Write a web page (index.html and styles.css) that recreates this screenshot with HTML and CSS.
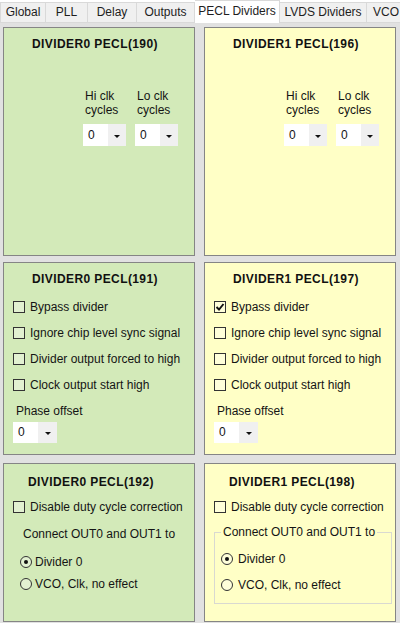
FILE: index.html
```html
<!DOCTYPE html>
<html lang="en">
<head>
    <meta charset="UTF-8">
    <meta name="viewport" content="width=device-width, initial-scale=1.0">
    <title>PECL Dividers</title>
    <link rel="stylesheet" href="styles.css">
</head>
<body>
    <div class="tabs">
        <div class="tab tab-global">Global</div>
        <div class="tab tab-pll">PLL</div>
        <div class="tab tab-delay">Delay</div>
        <div class="tab tab-outputs">Outputs</div>
        <div class="tab tab-pecl selected">PECL Dividers</div>
        <div class="tab tab-lvds">LVDS Dividers</div>
        <div class="tab tab-vco">VCO</div>
    </div>

    <div class="page">
        <div class="row row-1">
            <div class="panel green">
                <div class="title">DIVIDER0 PECL(190)</div>
                <div class="cycles">
                    <div class="cycle-col">
                        <div class="cycle-label">Hi clk<br>cycles</div>
                        <div class="combo"><span class="combo-val">0</span><span class="combo-btn"><span class="arrow"></span></span></div>
                    </div>
                    <div class="cycle-col">
                        <div class="cycle-label">Lo clk<br>cycles</div>
                        <div class="combo"><span class="combo-val">0</span><span class="combo-btn"><span class="arrow"></span></span></div>
                    </div>
                </div>
            </div>
            <div class="panel yellow">
                <div class="title">DIVIDER1 PECL(196)</div>
                <div class="cycles">
                    <div class="cycle-col">
                        <div class="cycle-label">Hi clk<br>cycles</div>
                        <div class="combo"><span class="combo-val">0</span><span class="combo-btn"><span class="arrow"></span></span></div>
                    </div>
                    <div class="cycle-col">
                        <div class="cycle-label">Lo clk<br>cycles</div>
                        <div class="combo"><span class="combo-val">0</span><span class="combo-btn"><span class="arrow"></span></span></div>
                    </div>
                </div>
            </div>
        </div>

        <div class="row row-2">
            <div class="panel green">
                <div class="title">DIVIDER0 PECL(191)</div>
                <div class="checks">
                    <div class="check"><span class="box"></span>Bypass divider</div>
                    <div class="check"><span class="box"></span>Ignore chip level sync signal</div>
                    <div class="check"><span class="box"></span>Divider output forced to high</div>
                    <div class="check"><span class="box"></span>Clock output start high</div>
                </div>
                <div class="phase-label">Phase offset</div>
                <div class="combo phase-combo"><span class="combo-val">0</span><span class="combo-btn"><span class="arrow"></span></span></div>
            </div>
            <div class="panel yellow">
                <div class="title">DIVIDER1 PECL(197)</div>
                <div class="checks">
                    <div class="check"><span class="box"><svg width="10" height="10" viewBox="0 0 10 10"><polyline points="1.5,5 4,7.5 8.5,2" fill="none" stroke="#111" stroke-width="1.9"/></svg></span>Bypass divider</div>
                    <div class="check"><span class="box"></span>Ignore chip level sync signal</div>
                    <div class="check"><span class="box"></span>Divider output forced to high</div>
                    <div class="check"><span class="box"></span>Clock output start high</div>
                </div>
                <div class="phase-label">Phase offset</div>
                <div class="combo phase-combo"><span class="combo-val">0</span><span class="combo-btn"><span class="arrow"></span></span></div>
            </div>
        </div>

        <div class="row row-3">
            <div class="panel green">
                <div class="title">DIVIDER0 PECL(192)</div>
                <div class="check duty"><span class="box"></span>Disable duty cycle correction</div>
                <div class="connect-label">Connect OUT0 and OUT1 to</div>
                <div class="radios">
                    <div class="radio"><span class="circle on"></span>Divider 0</div>
                    <div class="radio"><span class="circle"></span>VCO, Clk, no effect</div>
                </div>
            </div>
            <div class="panel yellow">
                <div class="title">DIVIDER1 PECL(198)</div>
                <div class="check duty"><span class="box"></span>Disable duty cycle correction</div>
                <fieldset class="group">
                    <legend>Connect OUT0 and OUT1 to</legend>
                    <div class="radio"><span class="circle on"></span>Divider 0</div>
                    <div class="radio"><span class="circle"></span>VCO, Clk, no effect</div>
                </fieldset>
            </div>
        </div>
    </div>
</body>
</html>
```

FILE: styles.css
```css
body {
    margin: 0;
    width: 400px;
    height: 623px;
    overflow: hidden;
    font-family: "Liberation Sans", Arial, sans-serif;
    font-size: 12px;
    color: #141414;
    background: #fff;
}

/* tab strip */
.tabs {
    display: flex;
    height: 22px;
    border-bottom: 1px solid #d9d9d9;
    white-space: nowrap;
}
.tab {
    box-sizing: border-box;
    flex: none;
    margin-top: 2px;
    height: 20px;
    line-height: 19px;
    text-align: center;
    background: #f0f0f0;
    border: 1px solid #d9d9d9;
    border-left: none;
    border-bottom: none;
    color: #1e1e1e;
}
.tab-global { width: 46px; border-left: 1px solid #d9d9d9; }
.tab-pll { width: 42px; }
.tab-delay { width: 49px; }
.tab-outputs { width: 58px; }
.tab-pecl { width: 85px; }
.tab-lvds { width: 87px; }
.tab-vco { width: 40px; text-align: left; padding-left: 6px; }
.tab.selected {
    margin-top: 0;
    height: 23px;
    line-height: 21px;
    background: #fff;
    position: relative;
    z-index: 1;
}

/* tab page */
.page {
    height: 600px;
    box-sizing: border-box;
    padding: 4px 0 0 3px;
    background: #e1e1e1;
}
.row {
    display: flex;
    gap: 9px;
}
.row-1 { height: 229px; margin-bottom: 6px; }
.row-2 { height: 193px; margin-bottom: 8px; }
.row-3 { height: 159px; }

.panel {
    box-sizing: border-box;
    width: 192px;
    height: 100%;
    border: 1px solid #858585;
}
.green { background: #d3eab9; }
.yellow { background: #ffffc6; }

.title {
    padding: 8px 0 0 28px;
    line-height: 16px;
    font-weight: bold;
    letter-spacing: 0.4px;
    color: #111;
}
.row-3 .title { padding: 10px 0 0 24px; }

/* hi / lo clock cycles */
.cycles {
    display: flex;
    gap: 9px;
    margin-top: 37px;
    padding-left: 79px;
}
.cycle-col { width: 43px; }
.cycle-label {
    padding-left: 2px;
    line-height: 14px;
}
.cycles .combo { margin-top: 7px; }

.combo {
    display: flex;
    width: 43px;
    height: 22px;
    background: #fff;
}
.combo-val {
    flex: 1;
    padding-left: 5px;
    line-height: 22px;
}
.combo-btn {
    width: 18px;
    background: #f0f0f0;
    display: flex;
    align-items: center;
    justify-content: center;
}
.arrow {
    width: 0;
    height: 0;
    margin-top: 2px;
    border-left: 3px solid transparent;
    border-right: 3px solid transparent;
    border-top: 3px solid #111;
}

/* checkboxes */
.checks { margin-top: 7px; }
.check {
    display: flex;
    align-items: center;
    height: 26px;
    padding-left: 9px;
}
.box {
    box-sizing: border-box;
    width: 12px;
    height: 12px;
    margin-right: 5px;
    border: 1px solid #333;
    background: rgba(255, 255, 255, 0.35);
    display: flex;
    align-items: center;
    justify-content: center;
}
.phase-label {
    margin-top: 6px;
    padding-left: 12px;
    line-height: 14px;
}
.phase-combo {
    margin: 4px 0 0 9px;
    width: 44px;
    height: 21px;
}
.phase-combo .combo-val { line-height: 21px; }
.phase-combo .combo-btn { width: 19px; }

/* output select */
.duty { margin-top: 4px; }
.connect-label {
    margin-top: 7px;
    padding-left: 19px;
    line-height: 14px;
}
.radios { margin-top: 10px; }
.radio {
    display: flex;
    align-items: center;
    height: 22px;
    padding-left: 16px;
}
.circle {
    box-sizing: border-box;
    width: 12px;
    height: 12px;
    margin-right: 3px;
    border: 1px solid #333;
    border-radius: 50%;
    background: rgba(255, 255, 255, 0.35);
    display: flex;
    align-items: center;
    justify-content: center;
}
.circle.on::after {
    content: "";
    width: 4px;
    height: 4px;
    border-radius: 50%;
    background: #111;
}

.group {
    box-sizing: border-box;
    margin: 5px 0 0 9px;
    width: 178px;
    height: 79px;
    padding: 7px 0 4px 6px;
    border: 1px solid #d9d9d1;
}
.group legend {
    padding: 0 2px;
    line-height: 14px;
}
.group .radio {
    height: 26px;
    padding-left: 0;
}
.group .circle { margin-right: 5px; }
```
